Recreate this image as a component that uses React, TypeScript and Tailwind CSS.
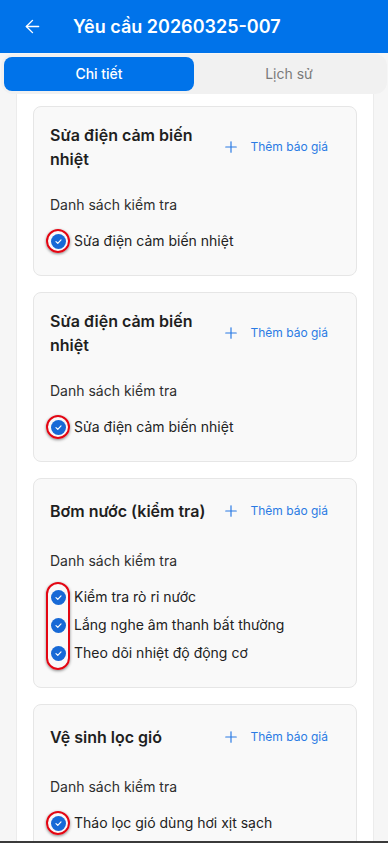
import React from 'react';
import { ArrowLeft, Plus } from 'lucide-react';

interface Task {
  title: string;
  items: string[];
}

const tasks: Task[] = [
  { title: 'Sửa điện cảm biến nhiệt', items: ['Sửa điện cảm biến nhiệt'] },
  { title: 'Sửa điện cảm biến nhiệt', items: ['Sửa điện cảm biến nhiệt'] },
  {
    title: 'Bơm nước (kiểm tra)',
    items: ['Kiểm tra rò rỉ nước', 'Lắng nghe âm thanh bất thường', 'Theo dõi nhiệt độ động cơ'],
  },
  { title: 'Vệ sinh lọc gió', items: ['Tháo lọc gió dùng hơi xịt sạch'] },
];

const CheckDot = () => (
  <span className="flex h-[15px] w-[15px] shrink-0 items-center justify-center rounded-full bg-[#1769d6]">
    <svg width="9" height="9" viewBox="0 0 10 10" fill="none">
      <path d="M2.2 5.2 4.2 7 7.8 3.2" stroke="white" strokeWidth="1.3" strokeLinecap="round" strokeLinejoin="round" />
    </svg>
  </span>
);

const TaskCard: React.FC<{ task: Task }> = ({ task }) => {
  const many = task.items.length > 1;
  return (
    <div className="rounded-lg border border-[#e6e6e6] bg-[#f9f9f9] px-4 pt-4 pb-5">
      {/* Header */}
      <div className="flex items-center">
        <h3 className="min-w-0 flex-1 text-base leading-6 font-semibold text-[#1f1f1f]">{task.title}</h3>
        <button className="flex shrink-0 items-center gap-[10px] py-[7px] pl-3 pr-3 text-xs text-[#2a7be4]">
          <Plus size={18} strokeWidth={1.6} />
          <span>Thêm báo giá</span>
        </button>
      </div>

      <p className="mt-6 text-sm leading-5 text-[#2e2e2e]">Danh sách kiểm tra</p>

      {/* Checklist */}
      <div className="relative mt-3">
        <span
          className={
            many
              ? 'pointer-events-none absolute -top-[1px] -bottom-[3px] left-[-4px] w-6 rounded-full border-[2.5px] border-[#e30613] shadow-[0_1px_3px_rgba(0,0,0,0.45)]'
              : 'pointer-events-none absolute top-[2px] left-[-4px] h-6 w-6 rounded-full border-[2.5px] border-[#e30613] shadow-[0_1px_3px_rgba(0,0,0,0.45)]'
          }
        />
        {task.items.map((item, i) => (
          <div key={i} className="flex h-7 items-center gap-2 pl-px">
            <CheckDot />
            <span className="text-sm text-[#222]">{item}</span>
          </div>
        ))}
      </div>
    </div>
  );
};

export default function App() {
  return (
    <div
      className="flex h-[843px] flex-col overflow-hidden bg-[#f6f6f6]"
      style={{ fontFamily: 'Inter, "Noto Sans", sans-serif' }}
    >
      {/* Top bar */}
      <div className="flex h-[53px] shrink-0 items-center bg-[#0073ea] pl-[22px] text-white">
        <ArrowLeft size={21} strokeWidth={1.6} />
        <h1 className="ml-[30px] text-lg font-semibold">Yêu cầu 20260325-007</h1>
      </div>

      {/* Tabs */}
      <div className="mx-px mt-px grid h-10 shrink-0 grid-cols-2 rounded-xl bg-[#f1f1f1] p-[3px]">
        <button className="rounded-lg bg-[#0073ea] text-sm font-medium text-white">Chi tiết</button>
        <button className="text-sm text-[#7a7a7a]">Lịch sử</button>
      </div>

      {/* Content */}
      <div className="ml-4 mr-[14px] flex flex-1 flex-col gap-4 overflow-hidden border-x border-[#ececec] bg-white px-4 pt-3">
        {tasks.map((t, i) => (
          <TaskCard key={i} task={t} />
        ))}
      </div>

      <div className="h-[2px] shrink-0 bg-[#3a3a3a]" />
    </div>
  );
}
